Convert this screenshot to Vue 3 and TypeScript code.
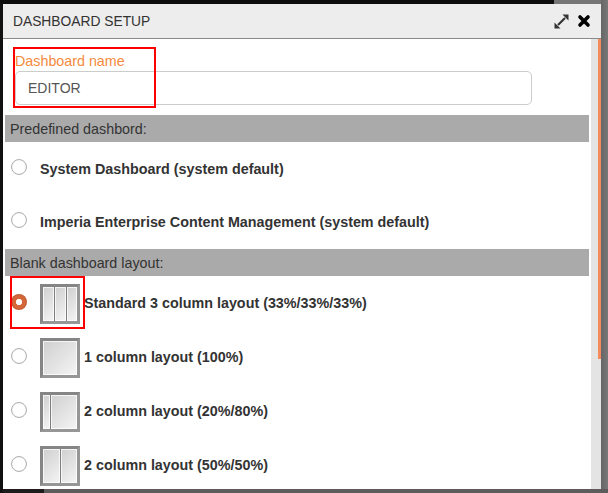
<script setup lang="ts">
interface Row { id: string; label: string; cols: number[]; checked?: boolean }
const predefined: string[] = [
  'System Dashboard (system default)',
  'Imperia Enterprise Content Management (system default)',
]
const blanks: Row[] = [
  { id: 'a', label: 'Standard 3 column layout (33%/33%/33%)', cols: [11, 11, 10], checked: true },
  { id: 'b', label: '1 column layout (100%)', cols: [34] },
  { id: 'c', label: '2 column layout (20%/80%)', cols: [7, 26] },
  { id: 'd', label: '2 column layout (50%/50%)', cols: [17, 16] },
]
</script>

<template>
  <div class="page">
    <section class="dialog">
      <header class="head">
        <h1 class="title">DASHBOARD SETUP</h1>
        <div class="tools">
          <svg width="15" height="15" viewBox="0 0 15 15">
            <path fill="#333" d="M8.500 0.500H14.500V6.500ZM0.500 8.500V14.500H6.500Z" />
            <path d="M4 11L11 4" stroke="#333" stroke-width="2.200" />
          </svg>
          <svg width="14" height="14" viewBox="0 0 14 14">
            <path d="M3 3l8 8M11 3l-8 8" stroke="#000" stroke-width="3.600" stroke-linecap="round" />
          </svg>
        </div>
      </header>
      <div class="body">
        <div class="content">
          <label class="name-label">Dashboard name</label>
          <div class="input">EDITOR</div>
          <div class="bar first">Predefined dashbord:</div>
          <div v-for="p in predefined" :key="p" class="pre-row">
            <span class="radio"></span>
            <span class="label">{{ p }}</span>
          </div>
          <div class="bar">Blank dashboard layout:</div>
          <div v-for="r in blanks" :key="r.id" class="blank-row">
            <span class="radio" :class="{ on: r.checked }"></span>
            <span class="thumb">
              <span v-for="(c, i) in r.cols" :key="i" class="panel" :style="{ width: c + 'px' }"></span>
            </span>
            <span class="label">{{ r.label }}</span>
          </div>
          <div class="mark mark-name"></div>
          <div class="mark mark-layout"></div>
        </div>
        <div class="track"><div class="thumb-bar"></div></div>
      </div>
    </section>
  </div>
</template>

<style>
html, body { margin: 0; overflow: hidden; }
</style>

<style scoped>
.page {
  width: 608px;
  height: 493px;
  box-sizing: border-box;
  padding: 4px 0 0 3px;
  overflow: hidden;
  font-family: "Liberation Sans", Arial, sans-serif;
  font-size: 14.3px;
  color: #333;
  background:
    linear-gradient(#0d0d0d, #0d0d0d) 0 0 / 554px 4px no-repeat,
    linear-gradient(#111, #111) 0 0 / 3px 493px no-repeat,
    linear-gradient(#1c1c1c, #1c1c1c) 0 489px / 44px 4px no-repeat,
    linear-gradient(#5c5c5c, #5c5c5c) 0 489px / 608px 4px no-repeat,
    linear-gradient(90deg, #666, #787878) 601px 0 / 7px 493px no-repeat,
    #767676;
}
.dialog {
  width: 598px;
  height: 485px;
  background: #fff;
  display: flex;
  flex-direction: column;
}
.head {
  height: 34px;
  flex: none;
  background: #eeeded;
  border-bottom: 1px solid #8a8a8a;
  display: flex;
  align-items: center;
  justify-content: space-between;
  padding: 0 10px;
}
.title { margin: 0; font-size: 13.800px; font-weight: 400; color: #333; }
.tools { display: flex; align-items: center; gap: 8px; }
.body { flex: 1; display: flex; min-height: 0; }
.content { flex: 1; position: relative; padding: 0 2px; min-width: 0; }
.name-label { display: block; margin: 13px 0 0 10px; color: #f58a3c; line-height: 19px; }
.input {
  box-sizing: border-box;
  margin: 0 0 0 10px;
  width: 517px;
  height: 34px;
  border: 1px solid #ccc;
  border-radius: 5px;
  padding: 0 12px;
  line-height: 32px;
  font-size: 14px;
  color: #555;
}
.bar {
  height: 27px;
  line-height: 28px;
  background: #aaa;
  padding-left: 5px;
  color: #333;
}
.bar.first { margin-top: 10px; }
.pre-row {
  height: 53.500px;
  display: flex;
  align-items: center;
  padding-left: 6px;
  gap: 13px;
}
.pre-row .radio { margin-top: -4px; }
.blank-row {
  height: 54px;
  display: flex;
  align-items: center;
  padding-left: 6px;
  gap: 13px;
}
.blank-row .radio { margin-top: -2px; }
.radio {
  box-sizing: border-box;
  width: 16px;
  height: 16px;
  flex: none;
  border-radius: 50%;
  border: 1px solid #b0b0b0;
  background: #fff;
  box-shadow: inset 0 0 1px #ccc;
}
.radio.on {
  border: none;
  background: radial-gradient(circle at 50% 50%, #fff 0 2.800px, #d4683a 3.500px 6px, #bf5a2e 8px);
  box-shadow: none;
}
.thumb {
  box-sizing: border-box;
  width: 40px;
  height: 40px;
  flex: none;
  margin: 2px -9px 0 0;
  display: flex;
  gap: 1px;
  border: 3px solid;
  border-color: #858585 #969696 #969696 #858585;
  background: #7d7d7d;
}
.panel {
  display: block;
  flex: none;
  height: 100%;
  background: linear-gradient(135deg, #cfcfcf, #f5f5f5);
  box-shadow: inset 0 0 0 1px rgba(255, 255, 255, 0.75);
}
.label { font-size: 14.340px; font-weight: 700; color: #333; }
.mark { position: absolute; border: 2px solid #f00; box-sizing: border-box; pointer-events: none; }
.mark-name { left: 10px; top: 8px; width: 143px; height: 61px; }
.mark-layout { left: 7px; top: 237px; width: 75px; height: 53px; }
.track { width: 10px; flex: none; background: #e4e4e4; position: relative; }
.thumb-bar { position: absolute; right: 0; top: 0; width: 3px; height: 320px; background: #f58a5c; }
</style>
